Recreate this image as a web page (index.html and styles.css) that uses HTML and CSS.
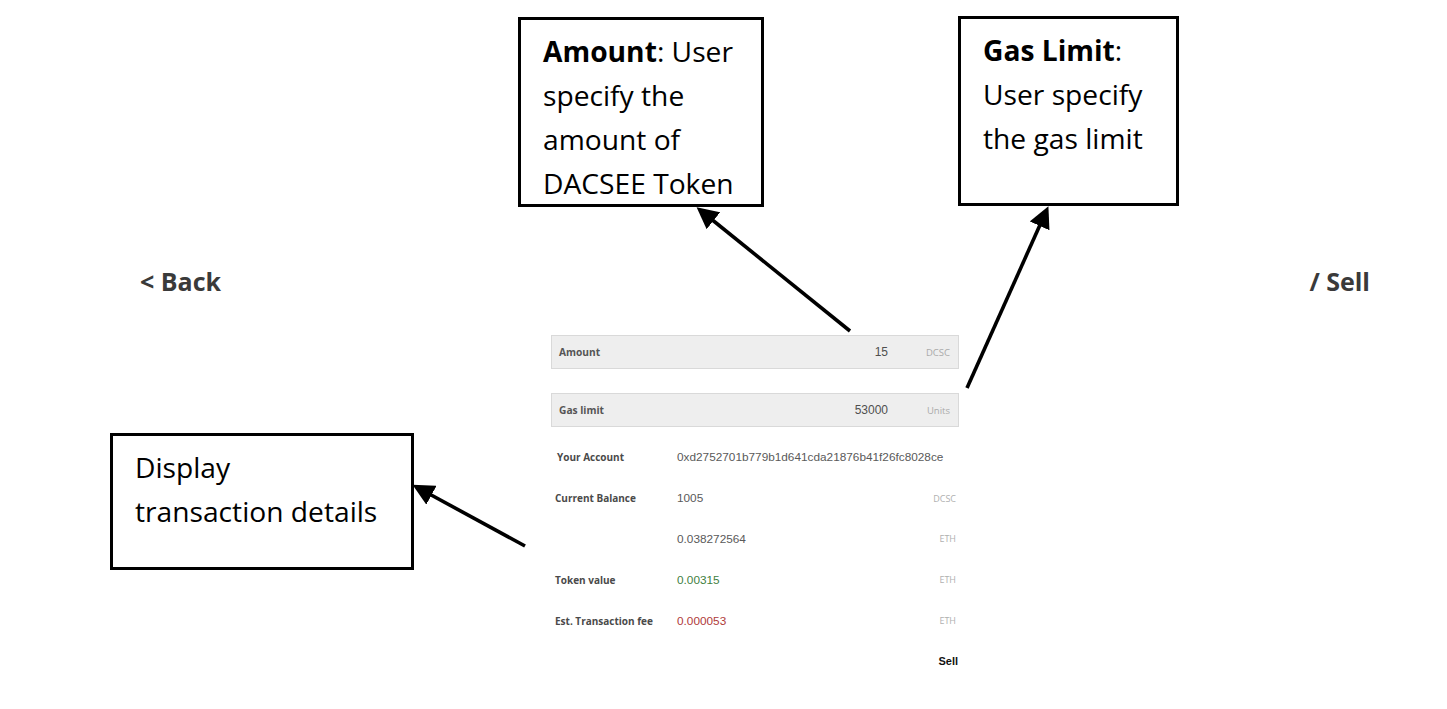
FILE: index.html
```html
<!DOCTYPE html>
<html>
<head>
<meta charset="utf-8">
<link rel="stylesheet" href="styles.css">
</head>
<body>
<div class="page">
  <header class="topbar">
    <a class="back">&lt; Back</a>
    <span class="crumb">/ Sell</span>
  </header>
  <main class="form">
    <div class="field">
      <span class="field-label">Amount</span>
      <span class="field-value">15</span>
      <span class="field-unit">DCSC</span>
    </div>
    <div class="field field-second">
      <span class="field-label">Gas limit</span>
      <span class="field-value">53000</span>
      <span class="field-unit">Units</span>
    </div>
    <div class="details">
      <div class="row">
        <span class="row-label label-first">Your Account</span>
        <span class="row-value">0xd2752701b779b1d641cda21876b41f26fc8028ce</span>
        <span class="row-unit"></span>
      </div>
      <div class="row">
        <span class="row-label">Current Balance</span>
        <span class="row-value">1005</span>
        <span class="row-unit">DCSC</span>
      </div>
      <div class="row">
        <span class="row-label"></span>
        <span class="row-value">0.038272564</span>
        <span class="row-unit">ETH</span>
      </div>
      <div class="row">
        <span class="row-label">Token value</span>
        <span class="row-value positive">0.00315</span>
        <span class="row-unit">ETH</span>
      </div>
      <div class="row">
        <span class="row-label">Est. Transaction fee</span>
        <span class="row-value negative">0.000053</span>
        <span class="row-unit">ETH</span>
      </div>
      <div class="row row-action">
        <button class="sell-btn">Sell</button>
      </div>
    </div>
  </main>

  <div class="callout callout-amount"><b>Amount</b>: User<br>specify the<br>amount of<br>DACSEE Token</div>
  <div class="callout callout-gas"><b>Gas Limit</b>:<br>User specify<br>the gas limit</div>
  <div class="callout callout-details">Display<br>transaction details</div>

  <svg class="arrows" width="1447" height="709" viewBox="0 0 1447 709">
    <defs>
      <marker id="head" markerWidth="6" markerHeight="6" refX="3" refY="3" orient="auto" markerUnits="strokeWidth">
        <path d="M0,0 L6,3 L0,6 Z" fill="#000"/>
      </marker>
    </defs>
    <line x1="850" y1="331" x2="705" y2="214" stroke="#000" stroke-width="3.6" marker-end="url(#head)"/>
    <line x1="967" y1="388" x2="1044" y2="216" stroke="#000" stroke-width="3.6" marker-end="url(#head)"/>
    <line x1="525" y1="546" x2="422" y2="490" stroke="#000" stroke-width="3.6" marker-end="url(#head)"/>
  </svg>
</div>
</body>
</html>
```

FILE: styles.css
```css
html, body {
  margin: 0;
  padding: 0;
  background: #fff;
}

.page {
  position: relative;
  width: 1447px;
  height: 709px;
  overflow: hidden;
  font-family: "Liberation Sans", Arial, sans-serif;
}

.topbar {
  display: flex;
  justify-content: space-between;
  align-items: center;
  padding: 264px 77px 0 140px;
  height: 34px;
  font-family: "Open Sans", sans-serif;
  font-weight: 700;
  font-size: 25px;
  line-height: 34px;
  color: #3a3a3a;
}

.back, .crumb {
  text-decoration: none;
  color: #3a3a3a;
}

.form {
  width: 408px;
  margin: 37px 0 0 551px;
}

.field {
  display: flex;
  align-items: center;
  box-sizing: border-box;
  height: 34px;
  background: #eeeeee;
  border: 1px solid #d9d9d9;
  padding: 0 8px 0 7px;
}

.field-second {
  margin-top: 24px;
}

.field-label {
  flex: 1;
  font-family: "Open Sans", sans-serif;
  font-weight: 700;
  font-size: 10.2px;
  color: #555;
}

.field-value {
  font-size: 12px;
  color: #4f4f4f;
}

.field-unit {
  width: 62px;
  text-align: right;
  font-family: "Open Sans", sans-serif;
  font-size: 9.5px;
  color: #aaaaaa;
}

.details {
  margin-top: 10px;
}

.row {
  display: flex;
  align-items: center;
  height: 40.8px;
  padding: 0 3px 0 4px;
}

.row-label {
  width: 122px;
  flex: none;
  font-family: "Open Sans", sans-serif;
  font-weight: 700;
  font-size: 10px;
  color: #4a4a4a;
}

.label-first {
  padding-left: 2px;
  width: 120px;
}

.row-value {
  flex: 1;
  font-size: 11.8px;
  color: #5a5a5a;
}

.row-value.positive {
  color: #3f7f3f;
}

.row-value.negative {
  color: #b03a3a;
}

.row-unit {
  font-family: "Open Sans", sans-serif;
  font-size: 9px;
  color: #b0b0b0;
}

.row-action {
  justify-content: flex-end;
  padding-right: 1px;
}

.sell-btn {
  background: none;
  border: 0;
  padding: 0;
  font-family: "Liberation Sans", Arial, sans-serif;
  font-weight: 700;
  font-size: 11px;
  color: #111;
}

.callout {
  position: absolute;
  box-sizing: border-box;
  background: #fff;
  border: 3px solid #000;
  font-family: "Open Sans", sans-serif;
  font-size: 28.2px;
  line-height: 44px;
  color: #000;
  white-space: nowrap;
}

.callout b {
  font-weight: 700;
}

.callout-amount {
  left: 518px;
  top: 17px;
  width: 246px;
  height: 190px;
  padding: 9px 0 0 22px;
}

.callout-gas {
  left: 958px;
  top: 16px;
  width: 221px;
  height: 190px;
  padding: 9px 0 0 22px;
}

.callout-details {
  left: 110px;
  top: 433px;
  width: 304px;
  height: 137px;
  padding: 9px 0 0 22px;
}

.arrows {
  position: absolute;
  left: 0;
  top: 0;
  pointer-events: none;
}
```
